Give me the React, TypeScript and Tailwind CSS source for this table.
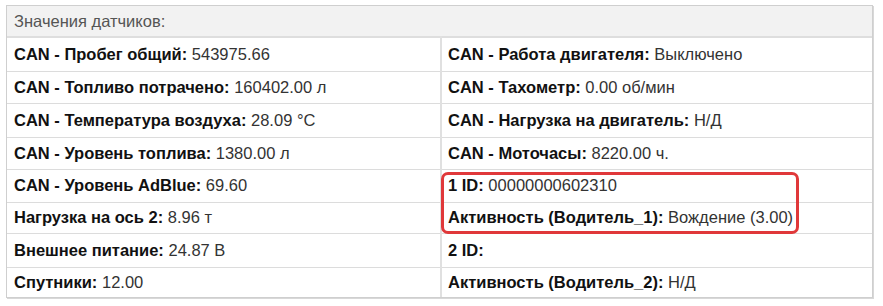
const rows: { h: string; left: [string, string]; right: [string, string] }[] = [
  { h: 'h-[34px]', left: ['CAN - Пробег общий:', '543975.66'], right: ['CAN - Работа двигателя:', 'Выключено'] },
  { h: 'h-[32px]', left: ['CAN - Топливо потрачено:', '160402.00 л'], right: ['CAN - Тахометр:', '0.00 об/мин'] },
  { h: 'h-[34px]', left: ['CAN - Температура воздуха:', '28.09 °C'], right: ['CAN - Нагрузка на двигатель:', 'Н/Д'] },
  { h: 'h-[32px]', left: ['CAN - Уровень топлива:', '1380.00 л'], right: ['CAN - Моточасы:', '8220.00 ч.'] },
  { h: 'h-[33px]', left: ['CAN - Уровень AdBlue:', '69.60'], right: ['1 ID:', '00000000602310'] },
  { h: 'h-[31px]', left: ['Нагрузка на ось 2:', '8.96 т'], right: ['Активность (Водитель_1):', 'Вождение (3.00)'] },
  { h: 'h-[34px]', left: ['Внешнее питание:', '24.87 В'], right: ['2 ID:', ''] },
  { h: 'h-[30px]', left: ['Спутники:', '12.00'], right: ['Активность (Водитель_2):', 'Н/Д'] },
]

function Cell({ label, value, className }: { label: string; value: string; className?: string }) {
  return (
    <td className={`align-middle whitespace-nowrap ${className ?? ''}`}>
      <span className="font-bold text-[#111]">{label}</span>
      {value && <span className="text-[#333]"> {value}</span>}
    </td>
  )
}

export default function App() {
  return (
    <div className="bg-white w-[883px] h-[306px] pt-[5px] pl-[6px]" style={{ fontFamily: '"Liberation Sans", Arial, sans-serif' }}>
      <div className="relative w-[867px] border border-[#cfcfcf] shadow-[1px_1px_0_#d8d8d8]">
        <table className="w-full border-collapse text-[16.5px] leading-none">
          <thead>
            <tr className="h-[31px] bg-[#f2f2f2] border-b-2 border-[#dedede]">
              <th colSpan={2} className="px-[7px] text-left font-normal text-[#555]">
                Значения датчиков:
              </th>
            </tr>
          </thead>
          <tbody>
            {rows.map((r, i) => (
              <tr key={i} className={`${r.h} ${i < rows.length - 1 ? 'border-b border-[#dcdcdc]' : ''}`}>
                <Cell label={r.left[0]} value={r.left[1]} className="w-[434px] px-[7px] border-r-2 border-[#e0e0e0]" />
                <Cell label={r.right[0]} value={r.right[1]} className="pl-[6px] pr-[7px]" />
              </tr>
            ))}
          </tbody>
        </table>

        {/* highlight over driver 1 */}
        <div className="absolute left-[434px] top-[166px] w-[358px] h-[62px] border-[3px] border-[#e0383a] rounded-[7px] pointer-events-none" />
      </div>
    </div>
  )
}
